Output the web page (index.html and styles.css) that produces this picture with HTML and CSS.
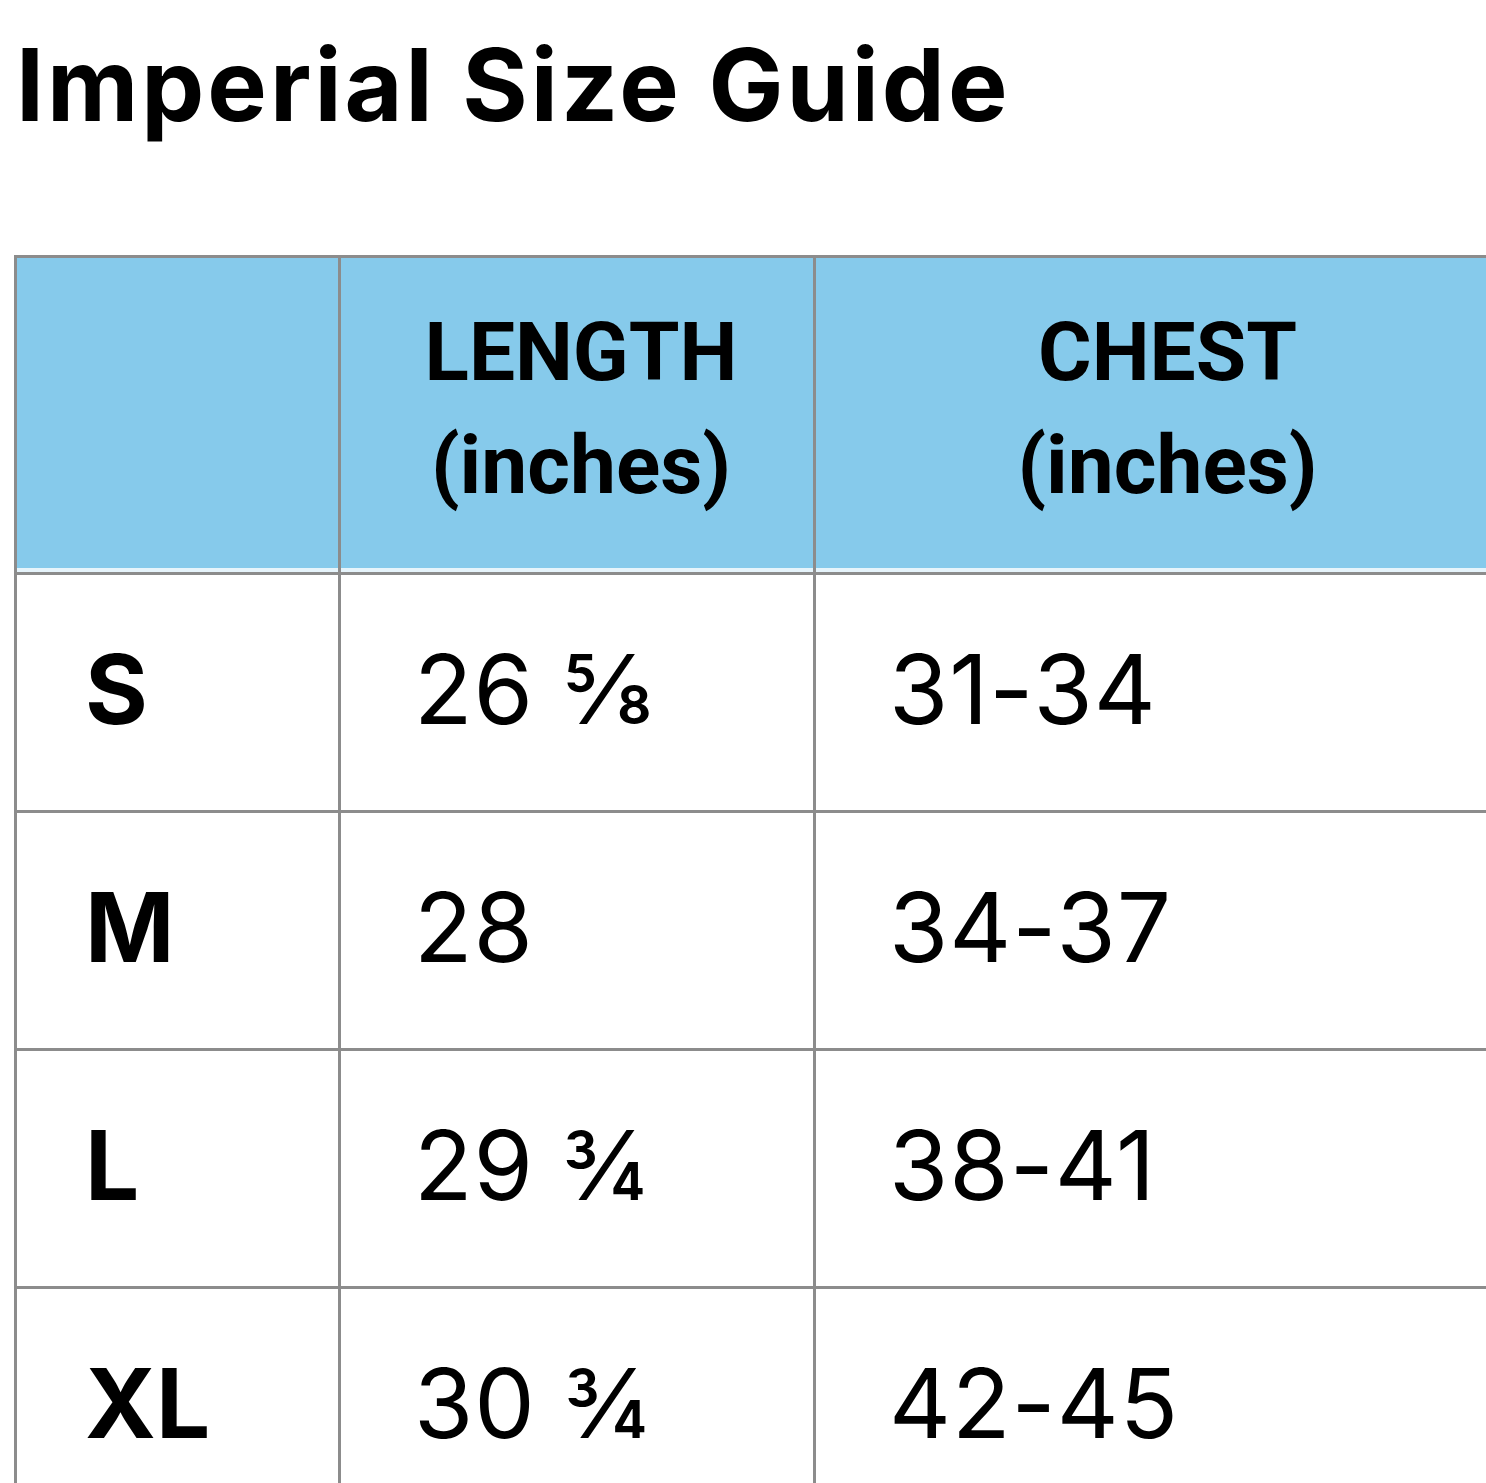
FILE: index.html
```html
<!DOCTYPE html>
<html lang="en">
<head>
<meta charset="utf-8">
<title>Imperial Size Guide</title>
<link rel="stylesheet" href="styles.css">
</head>
<body>
<main class="page">
  <h1 class="title">Imperial Size Guide</h1>
  <table class="sizes">
    <thead>
      <tr>
        <th class="col-size"></th>
        <th class="col-length">LENGTH<br>(inches)</th>
        <th class="col-chest">CHEST<br>(inches)</th>
      </tr>
    </thead>
    <tbody>
      <tr><td class="size">S</td><td>26 ⅝</td><td>31-34</td></tr>
      <tr><td class="size">M</td><td>28</td><td>34-37</td></tr>
      <tr><td class="size">L</td><td>29 ¾</td><td>38-41</td></tr>
      <tr><td class="size">XL</td><td>30 ¾</td><td>42-45</td></tr>
    </tbody>
  </table>
</main>
</body>
</html>
```

FILE: styles.css
```css
html, body {
  margin: 0;
  padding: 0;
  background: #ffffff;
  overflow: hidden;
}

.page {
  padding: 25px 0 0 14px;
  font-family: Inter, "Liberation Sans", sans-serif;
  color: #000;
}

.title {
  margin: 0 0 110px 2px;
  font-family: Inter, "Liberation Sans", sans-serif;
  font-weight: 700;
  font-size: 100px;
  line-height: 120px;
  letter-spacing: 3px;
}

.sizes {
  border-collapse: collapse;
  table-layout: fixed;
  width: 1500px;
}

.sizes th,
.sizes td {
  border: 3px solid #8c8c8c;
  padding: 0;
}

.col-size { width: 313px; }
.col-length { width: 464px; }
.col-chest { width: auto; }

.sizes thead th {
  background: #86caeb;
  height: 302px;
  padding-bottom: 12px;
  padding-left: 8px;
  font-family: Roboto, "Liberation Sans", sans-serif;
  font-weight: 700;
  font-size: 82px;
  line-height: 113px;
  text-align: center;
  vertical-align: middle;
  box-shadow: inset 0 -4px 0 #e6f4fb;
}

.sizes tbody td {
  height: 227px;
  padding-bottom: 8px;
  font-size: 96px;
  font-weight: 400;
  line-height: 1;
  padding-left: 73px;
  letter-spacing: 1px;
  vertical-align: middle;
}

.sizes tbody td.size {
  font-weight: 700;
  padding-left: 68px;
  letter-spacing: 0;
}
```
